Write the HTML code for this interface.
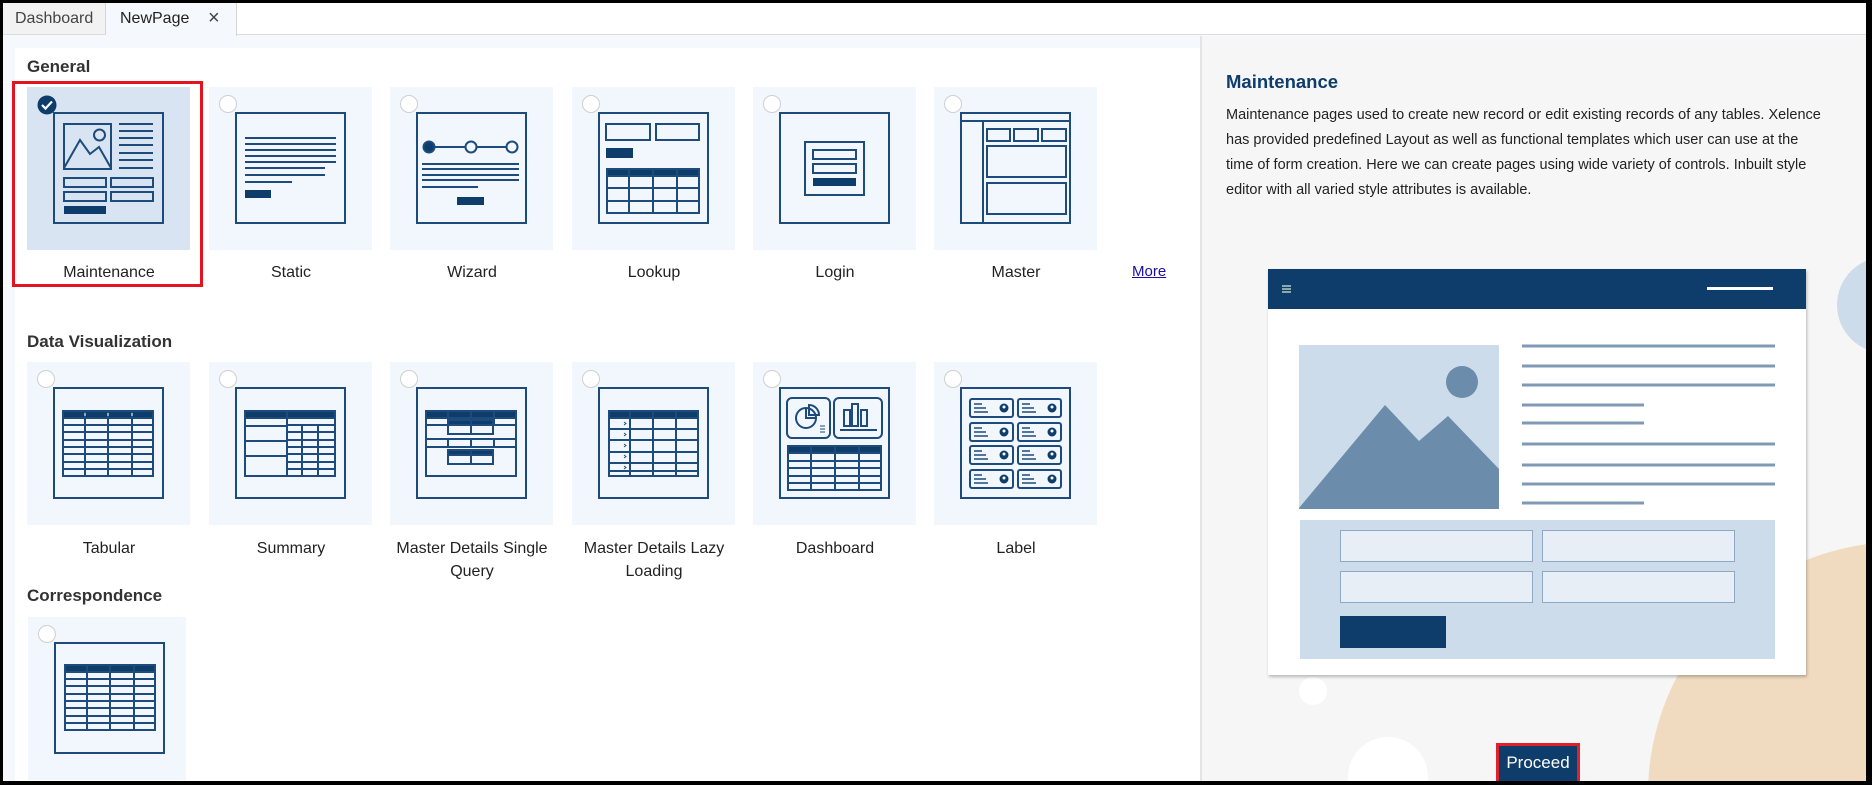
<!DOCTYPE html>
<html><head><meta charset="utf-8"><style>
*{margin:0;padding:0;box-sizing:border-box}
html,body{width:1872px;height:785px;overflow:hidden}
body{position:relative;background:#000;font-family:"Liberation Sans",Arial,sans-serif}
.a{position:absolute}
.tile{position:absolute;width:163px;height:163px;background:#f2f7fd}
.tile svg{position:absolute;left:26px;top:25px}
.radio{position:absolute;left:10px;top:8px;width:18px;height:18px;border-radius:50%;background:#fff;border:1.5px solid #cfcfcf}
.lbl{position:absolute;width:200px;text-align:center;font-size:16px;color:#222;line-height:23px}
.h{position:absolute;left:27px;font-size:17px;font-weight:bold;color:#333}
</style></head><body>
<div class="a" style="left:3px;top:3px;width:1863px;height:778px;background:#f5f8fc;overflow:hidden">
<div style="position:absolute;left:-3px;top:-3px;width:1872px;height:785px">
<!-- tab bar -->
<div class="a" style="left:3px;top:3px;width:1863px;height:32px;background:#fff;border-bottom:1px solid #dcdcdc"></div>
<div class="a" style="left:3px;top:3px;width:103px;height:32px;background:#f2f2f2;border-right:1px solid #d5d5d5;border-bottom:1px solid #dcdcdc;font-size:16px;color:#444;line-height:31px;padding-left:12px">Dashboard</div>
<div class="a" style="left:106px;top:3px;width:131px;height:33px;background:#f5f8fc;border-right:1px solid #d5d5d5;font-size:16px;color:#222;line-height:31px;padding-left:14px">NewPage<span style="position:absolute;left:102px;top:0;font-size:20px;color:#444">×</span></div>
<!-- left white panel -->
<div class="a" style="left:15px;top:48px;width:1185px;height:733px;background:#fff"></div>
<!-- right panel -->
<div class="a" style="left:1200px;top:36px;width:666px;height:745px;background:#f6f6f6;border-left:2px solid #e4e4e4;overflow:hidden">
  <div class="a" style="left:635px;top:221px;width:96px;height:96px;border-radius:50%;background:#cddceb"></div>
  <div class="a" style="left:446px;top:506px;width:504px;height:504px;border-radius:50%;background:#f0dbc0"></div>
  <div class="a" style="left:97px;top:641px;width:28px;height:28px;border-radius:50%;background:#fff"></div>
  <div class="a" style="left:146px;top:701px;width:80px;height:80px;border-radius:50%;background:#fff"></div>
  <div class="a" style="left:24px;top:35px;font-size:18.5px;font-weight:bold;color:#0e3d6b">Maintenance</div>
  <div class="a" style="left:24px;top:67px;width:640px;font-size:14.5px;line-height:25px;color:#222">Maintenance pages used to create new record or edit existing records of any tables. Xelence<br>has provided predefined Layout as well as functional templates which user can use at the<br>time of form creation. Here we can create pages using wide variety of controls. Inbuilt style<br>editor with all varied style attributes is available.</div>
  <div class="a" style="left:66px;top:233px;width:538px;height:406px;background:#fff;box-shadow:1px 2px 3px rgba(0,0,0,.25)">
    <div class="a" style="left:0;top:0;width:538px;height:40px;background:#0e3d6b"></div>
    <div class="a" style="left:14px;top:16px;width:9px;height:1.5px;background:#8aa;box-shadow:0 3px 0 #8aa,0 6px 0 #8aa"></div>
    <div class="a" style="left:439px;top:18px;width:66px;height:3px;background:#fff"></div>
    <svg class="a" style="left:31px;top:76px" width="200" height="164" viewBox="0 0 200 164"><rect width="200" height="164" fill="#cddceb"/><circle cx="163" cy="37" r="16" fill="#6b8cab"/><polygon points="0,163 86,60 120,96 149,71 200,124 200,164 0,164" fill="#6b8cab"/></svg>
    <svg class="a" style="left:254px;top:75px" width="256" height="162"><g stroke="#7f9ab5" stroke-width="3"><line x1="0" y1="2" x2="253" y2="2"/><line x1="0" y1="22" x2="253" y2="22"/><line x1="0" y1="41" x2="253" y2="41"/><line x1="0" y1="61" x2="122" y2="61"/><line x1="0" y1="79" x2="122" y2="79"/><line x1="0" y1="100" x2="253" y2="100"/><line x1="0" y1="121" x2="253" y2="121"/><line x1="0" y1="140" x2="253" y2="140"/><line x1="0" y1="159" x2="122" y2="159"/></g></svg>
    <div class="a" style="left:32px;top:251px;width:475px;height:139px;background:#cddceb"></div>
    <div class="a" style="left:72px;top:261px;width:193px;height:32px;background:#e8eef6;border:1.5px solid #8fa9c4"></div>
    <div class="a" style="left:274px;top:261px;width:193px;height:32px;background:#e8eef6;border:1.5px solid #8fa9c4"></div>
    <div class="a" style="left:72px;top:302px;width:193px;height:32px;background:#e8eef6;border:1.5px solid #8fa9c4"></div>
    <div class="a" style="left:274px;top:302px;width:193px;height:32px;background:#e8eef6;border:1.5px solid #8fa9c4"></div>
    <div class="a" style="left:72px;top:347px;width:106px;height:32px;background:#0e3d6b"></div>
  </div>
  <div class="a" style="left:294px;top:707px;width:84px;height:42px;background:#0e3d6b;border:3px solid #e0202b;color:#fff;font-size:17px;text-align:center;line-height:34px">Proceed</div>
</div>

<div class="h" style="top:57px">General</div>
<div class="h" style="top:332px">Data Visualization</div>
<div class="h" style="top:586px">Correspondence</div>

<div class="tile" style="left:27px;top:87px;background:#d9e4f2">
<svg width="111" height="112" viewBox="0 0 111 112" fill="none" stroke="#1c4b7c" stroke-width="2"><rect x="1" y="1" width="109" height="110"/><rect x="11" y="12" width="47" height="45"/><polyline points="11,56 27,28 37,42 46,35 58,56"/><circle cx="46.5" cy="23" r="5.5"/><g><line x1="66" y1="12" x2="100" y2="12"/><line x1="66" y1="19" x2="100" y2="19"/><line x1="66" y1="26" x2="100" y2="26"/><line x1="66" y1="33" x2="100" y2="33"/><line x1="66" y1="41" x2="100" y2="41"/><line x1="66" y1="48" x2="100" y2="48"/><line x1="66" y1="56" x2="100" y2="56"/></g><rect x="11" y="66" width="42" height="9"/><rect x="58" y="66" width="42" height="9"/><rect x="11" y="80" width="42" height="9"/><rect x="58" y="80" width="42" height="9"/><rect x="11" y="94" width="42" height="8" fill="#0f3d6b" stroke="none"/></svg>
<svg style="left:10px;top:8px" width="20" height="20" viewBox="0 0 20 20"><circle cx="10" cy="10" r="9.5" fill="#0f3d6b"/><polyline points="5,10 8.5,13.5 15,6.5" fill="none" stroke="#fff" stroke-width="2.2"/></svg>
</div>
<div class="lbl" style="left:9px;top:261px">Maintenance</div>

<div class="tile" style="left:209px;top:87px"><div class="radio"></div>
<svg width="111" height="112" viewBox="0 0 111 112" fill="none" stroke="#1c4b7c" stroke-width="2"><rect x="1" y="1" width="109" height="110"/><line x1="10" y1="26" x2="101" y2="26"/><line x1="10" y1="32" x2="101" y2="32"/><line x1="10" y1="38" x2="101" y2="38"/><line x1="10" y1="44" x2="101" y2="44"/><line x1="10" y1="50" x2="101" y2="50"/><line x1="10" y1="56" x2="90" y2="56"/><line x1="10" y1="63" x2="90" y2="63"/><line x1="10" y1="70" x2="57" y2="70"/><rect x="10" y="78" width="26" height="8" fill="#0f3d6b" stroke="none"/></svg></div>
<div class="lbl" style="left:191px;top:261px">Static</div>

<div class="tile" style="left:390px;top:87px"><div class="radio"></div>
<svg width="111" height="112" viewBox="0 0 111 112" fill="none" stroke="#1c4b7c" stroke-width="2"><rect x="1" y="1" width="109" height="110"/><line x1="13" y1="35" x2="96" y2="35"/><circle cx="13" cy="35" r="5.5" fill="#0f3d6b"/><circle cx="55" cy="35" r="5.5" fill="#f2f7fd"/><circle cx="96" cy="35" r="5.5" fill="#f2f7fd"/><line x1="6" y1="52" x2="103" y2="52"/><line x1="6" y1="57" x2="103" y2="57"/><line x1="6" y1="63" x2="103" y2="63"/><line x1="6" y1="68" x2="103" y2="68"/><line x1="6" y1="75" x2="62" y2="75"/><rect x="41" y="85" width="27" height="8" fill="#0f3d6b" stroke="none"/></svg></div>
<div class="lbl" style="left:372px;top:261px">Wizard</div>

<div class="tile" style="left:572px;top:87px"><div class="radio"></div>
<svg width="111" height="112" viewBox="0 0 111 112" fill="none" stroke="#1c4b7c" stroke-width="2"><rect x="1" y="1" width="109" height="110"/><rect x="8" y="12" width="44" height="16"/><rect x="58" y="12" width="43" height="16"/><rect x="8" y="36" width="27" height="10" fill="#0f3d6b" stroke="none"/><rect x="9" y="57" width="92" height="44"/><rect x="9" y="57" width="92" height="7" fill="#0f3d6b"/><line x1="9" y1="76" x2="101" y2="76"/><line x1="9" y1="89" x2="101" y2="89"/><line x1="31" y1="57" x2="31" y2="101"/><line x1="55" y1="57" x2="55" y2="101"/><line x1="79" y1="57" x2="79" y2="101"/></svg></div>
<div class="lbl" style="left:554px;top:261px">Lookup</div>

<div class="tile" style="left:753px;top:87px"><div class="radio"></div>
<svg width="111" height="112" viewBox="0 0 111 112" fill="none" stroke="#1c4b7c" stroke-width="2"><rect x="1" y="1" width="109" height="110"/><rect x="26" y="30" width="59" height="53"/><rect x="34" y="38" width="43" height="9"/><rect x="34" y="52" width="43" height="9"/><rect x="34" y="66" width="43" height="8" fill="#0f3d6b" stroke="none"/></svg></div>
<div class="lbl" style="left:735px;top:261px">Login</div>

<div class="tile" style="left:934px;top:87px"><div class="radio"></div>
<svg width="111" height="112" viewBox="0 0 111 112" fill="none" stroke="#1c4b7c" stroke-width="2"><rect x="1" y="1" width="109" height="110"/><line x1="1" y1="9" x2="110" y2="9"/><line x1="23" y1="9" x2="23" y2="111"/><rect x="27" y="17" width="23" height="12"/><rect x="54" y="17" width="24" height="12"/><rect x="82" y="17" width="24" height="12"/><rect x="27" y="34" width="79" height="31"/><rect x="27" y="71" width="79" height="31"/></svg></div>
<div class="lbl" style="left:916px;top:261px">Master</div>
<div class="a" style="left:1132px;top:263px;font-size:15px;color:#1a0dab;text-decoration:underline">More</div>

<div class="a" style="left:12px;top:81px;width:191px;height:206px;border:3px solid #e3141f"></div>

<div class="tile" style="left:27px;top:362px"><div class="radio"></div>
<svg width="111" height="112" viewBox="0 0 111 112" fill="none" stroke="#1c4b7c" stroke-width="2"><rect x="1" y="1" width="109" height="110"/><rect x="10" y="24" width="90" height="65"/><rect x="10" y="24" width="90" height="7" fill="#0f3d6b"/><g><line x1="10" y1="38" x2="100" y2="38"/><line x1="10" y1="45" x2="100" y2="45"/><line x1="10" y1="53" x2="100" y2="53"/><line x1="10" y1="60" x2="100" y2="60"/><line x1="10" y1="67" x2="100" y2="67"/><line x1="10" y1="75" x2="100" y2="75"/><line x1="10" y1="82" x2="100" y2="82"/><line x1="32" y1="24" x2="32" y2="89"/><line x1="55" y1="24" x2="55" y2="89"/><line x1="79" y1="24" x2="79" y2="89"/></g><g stroke="#fff" stroke-width="1"><line x1="32" y1="26" x2="32" y2="29"/><line x1="55" y1="26" x2="55" y2="29"/><line x1="79" y1="26" x2="79" y2="29"/></g></svg></div>
<div class="lbl" style="left:9px;top:537px">Tabular</div>

<div class="tile" style="left:209px;top:362px"><div class="radio"></div>
<svg width="111" height="112" viewBox="0 0 111 112" fill="none" stroke="#1c4b7c" stroke-width="2"><rect x="1" y="1" width="109" height="110"/><rect x="10" y="24" width="90" height="65"/><rect x="10" y="24" width="90" height="7" fill="#0f3d6b"/><line x1="52" y1="24" x2="52" y2="89"/><line x1="10" y1="39" x2="52" y2="39"/><line x1="10" y1="54" x2="52" y2="54"/><line x1="10" y1="69" x2="52" y2="69"/><line x1="52" y1="38" x2="100" y2="38"/><line x1="52" y1="45" x2="100" y2="45"/><line x1="52" y1="53" x2="100" y2="53"/><line x1="52" y1="60" x2="100" y2="60"/><line x1="52" y1="67" x2="100" y2="67"/><line x1="52" y1="75" x2="100" y2="75"/><line x1="52" y1="82" x2="100" y2="82"/><line x1="67" y1="38" x2="67" y2="89"/><line x1="83" y1="38" x2="83" y2="89"/></svg></div>
<div class="lbl" style="left:191px;top:537px">Summary</div>

<div class="tile" style="left:390px;top:362px"><div class="radio"></div>
<svg width="111" height="112" viewBox="0 0 111 112" fill="none" stroke="#1c4b7c" stroke-width="2"><rect x="1" y="1" width="109" height="110"/><rect x="10" y="24" width="90" height="65"/><rect x="10" y="24" width="90" height="7" fill="#0f3d6b"/><line x1="10" y1="38" x2="100" y2="38"/><line x1="32" y1="24" x2="32" y2="38"/><line x1="55" y1="24" x2="55" y2="38"/><line x1="78" y1="24" x2="78" y2="38"/><rect x="32" y="33" width="45" height="14"/><rect x="32" y="33" width="45" height="5" fill="#0f3d6b"/><line x1="55" y1="33" x2="55" y2="47"/><line x1="10" y1="52" x2="100" y2="52"/><line x1="10" y1="60" x2="100" y2="60"/><line x1="32" y1="52" x2="32" y2="60"/><line x1="55" y1="52" x2="55" y2="60"/><line x1="78" y1="52" x2="78" y2="60"/><rect x="32" y="63" width="45" height="14"/><rect x="32" y="63" width="45" height="5" fill="#0f3d6b"/><line x1="55" y1="63" x2="55" y2="77"/></svg></div>
<div class="lbl" style="left:372px;top:537px">Master Details Single<br>Query</div>

<div class="tile" style="left:572px;top:362px"><div class="radio"></div>
<svg width="111" height="112" viewBox="0 0 111 112" fill="none" stroke="#1c4b7c" stroke-width="2"><rect x="1" y="1" width="109" height="110"/><rect x="11" y="24" width="89" height="65"/><rect x="11" y="24" width="89" height="7" fill="#0f3d6b"/><line x1="11" y1="42" x2="100" y2="42"/><line x1="11" y1="53" x2="100" y2="53"/><line x1="11" y1="65" x2="100" y2="65"/><line x1="11" y1="76" x2="100" y2="76"/><line x1="11" y1="84" x2="100" y2="84"/><line x1="32" y1="24" x2="32" y2="89"/><line x1="55" y1="24" x2="55" y2="89"/><line x1="78" y1="24" x2="78" y2="89"/><g stroke-width="1"><polyline points="26,35 28,36.5 26,38"/><polyline points="26,46 28,47.5 26,49"/><polyline points="26,57 28,58.5 26,60"/><polyline points="26,68 28,69.5 26,71"/><polyline points="26,79 28,80.5 26,82"/></g></svg></div>
<div class="lbl" style="left:554px;top:537px">Master Details Lazy<br>Loading</div>

<div class="tile" style="left:753px;top:362px"><div class="radio"></div>
<svg width="111" height="112" viewBox="0 0 111 112" fill="none" stroke="#1c4b7c" stroke-width="2"><rect x="1" y="1" width="109" height="110"/><rect x="8" y="11" width="43" height="40" rx="5"/><rect x="55" y="11" width="48" height="40" rx="5"/><circle cx="27" cy="31" r="10"/><path d="M27 21 V31 H37"/><path d="M30 18 A10 10 0 0 1 40 28 H30 Z"/><g stroke-width="1"><line x1="41" y1="39" x2="46" y2="39"/><line x1="41" y1="42" x2="46" y2="42"/><line x1="41" y1="45" x2="46" y2="45"/></g><rect x="65" y="23" width="6" height="16"/><rect x="73" y="17" width="6" height="22"/><rect x="82" y="23" width="6" height="16"/><line x1="61" y1="43" x2="98" y2="43"/><rect x="9" y="59" width="93" height="44"/><rect x="9" y="59" width="93" height="7" fill="#0f3d6b"/><line x1="9" y1="74" x2="102" y2="74"/><line x1="9" y1="81" x2="102" y2="81"/><line x1="9" y1="89" x2="102" y2="89"/><line x1="9" y1="96" x2="102" y2="96"/><line x1="32" y1="59" x2="32" y2="103"/><line x1="56" y1="59" x2="56" y2="103"/><line x1="80" y1="59" x2="80" y2="103"/></svg></div>
<div class="lbl" style="left:735px;top:537px">Dashboard</div>

<div class="tile" style="left:934px;top:362px"><div class="radio"></div>
<svg width="111" height="112" viewBox="0 0 111 112" fill="none" stroke="#1c4b7c" stroke-width="2">
<defs><g id="lc"><rect x="0" y="0" width="43" height="18" rx="2"/><g stroke-width="1.5"><line x1="4" y1="5" x2="12" y2="5"/><line x1="4" y1="9" x2="16" y2="9"/><line x1="4" y1="13" x2="18" y2="13"/></g><circle cx="34" cy="9" r="4.5" fill="#0f3d6b" stroke="none"/><circle cx="34" cy="8" r="1.5" fill="#fff" stroke="none"/></g></defs>
<rect x="1" y="1" width="109" height="110"/>
<use href="#lc" x="10" y="12"/><use href="#lc" x="58" y="12"/><use href="#lc" x="10" y="36"/><use href="#lc" x="58" y="36"/><use href="#lc" x="10" y="59"/><use href="#lc" x="58" y="59"/><use href="#lc" x="10" y="83"/><use href="#lc" x="58" y="83"/></svg></div>
<div class="lbl" style="left:916px;top:537px">Label</div>

<div class="tile" style="left:28px;top:617px;width:158px"><div class="radio"></div>
<svg width="111" height="112" viewBox="0 0 111 112" fill="none" stroke="#1c4b7c" stroke-width="2"><rect x="1" y="1" width="109" height="110"/><rect x="11" y="23" width="90" height="65"/><rect x="11" y="23" width="90" height="7" fill="#0f3d6b"/><line x1="11" y1="37" x2="101" y2="37"/><line x1="11" y1="44" x2="101" y2="44"/><line x1="11" y1="52" x2="101" y2="52"/><line x1="11" y1="59" x2="101" y2="59"/><line x1="11" y1="66" x2="101" y2="66"/><line x1="11" y1="74" x2="101" y2="74"/><line x1="11" y1="81" x2="101" y2="81"/><line x1="33" y1="23" x2="33" y2="88"/><line x1="56" y1="23" x2="56" y2="88"/><line x1="80" y1="23" x2="80" y2="88"/></svg></div>
</div>
</div>
</body></html>
